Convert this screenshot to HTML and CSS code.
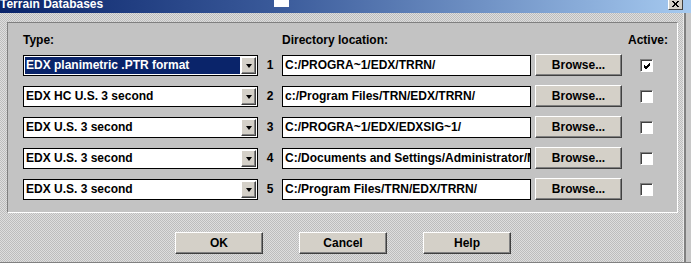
FILE: index.html
```html
<!DOCTYPE html>
<html>
<head>
<meta charset="utf-8">
<title>Terrain Databases</title>
<link rel="stylesheet" href="styles.css">
</head>
<body>
<div class="window">
  <div class="titlebar">
    <span class="title">Terrain Databases</span>
    <span class="tb-block"></span>
    <span class="tb-close"><svg width="9" height="7" viewBox="0 0 9 7"><path d="M1 0L7 6M2 0L8 6M7 0L1 6M8 0L2 6" stroke="#000" stroke-width="1" fill="none"/></svg></span>
  </div>
  <div class="frame">
    <div class="client">
      <div class="panel">
        <div class="grid">
          <div class="lbl">Type:</div>
          <div></div>
          <div class="lbl">Directory location:</div>
          <div></div>
          <div class="lbl lbl-act">Active:</div>

          <div class="combo"><span class="combo-text sel">EDX planimetric .PTR format</span><span class="combo-btn"><span class="arrow"></span></span></div>
          <div class="num">1</div>
          <div class="path">C:/PROGRA~1/EDX/TRRN/</div>
          <div class="btn browse">Browse...</div>
          <div class="chk-cell"><span class="chk"><svg width="9" height="9" viewBox="0 0 9 9"><path d="M1 4L3 6L7 2M1 5L3 7L7 3M1 3L3 5L7 1" stroke="#000" stroke-width="1" fill="none"/></svg></span></div>

          <div class="combo"><span class="combo-text">EDX HC U.S. 3 second</span><span class="combo-btn"><span class="arrow"></span></span></div>
          <div class="num">2</div>
          <div class="path">c:/Program Files/TRN/EDX/TRRN/</div>
          <div class="btn browse">Browse...</div>
          <div class="chk-cell"><span class="chk"></span></div>

          <div class="combo"><span class="combo-text">EDX U.S. 3 second</span><span class="combo-btn"><span class="arrow"></span></span></div>
          <div class="num">3</div>
          <div class="path">C:/PROGRA~1/EDX/EDXSIG~1/</div>
          <div class="btn browse">Browse...</div>
          <div class="chk-cell"><span class="chk"></span></div>

          <div class="combo"><span class="combo-text">EDX U.S. 3 second</span><span class="combo-btn"><span class="arrow"></span></span></div>
          <div class="num">4</div>
          <div class="path">C:/Documents and Settings/Administrator/M</div>
          <div class="btn browse">Browse...</div>
          <div class="chk-cell"><span class="chk"></span></div>

          <div class="combo"><span class="combo-text">EDX U.S. 3 second</span><span class="combo-btn"><span class="arrow"></span></span></div>
          <div class="num">5</div>
          <div class="path">C:/Program Files/TRN/EDX/TRRN/</div>
          <div class="btn browse">Browse...</div>
          <div class="chk-cell"><span class="chk"></span></div>
        </div>
      </div>
      <div class="actions">
        <div class="btn action">OK</div>
        <div class="btn action">Cancel</div>
        <div class="btn action">Help</div>
      </div>
    </div>
    <div class="rframe"></div>
  </div>
  <div class="bframe"></div>
</div>
</body>
</html>
```

FILE: styles.css
```css
* { box-sizing: border-box; }
html, body { margin: 0; padding: 0; }
body {
  font-family: "Liberation Sans", Arial, sans-serif;
  font-weight: bold;
  font-size: 12px;
  color: #000;
  background: #c0c0c0;
}
.window {
  width: 691px;
  height: 263px;
  display: flex;
  flex-direction: column;
  overflow: hidden;
}
.titlebar {
  height: 13px;
  flex: 0 0 13px;
  display: flex;
  align-items: flex-start;
  background: linear-gradient(to right, #0a246a 0%, #3a5a9a 40%, #a6caf0 100%);
  overflow: hidden;
}
.title {
  flex: 0 0 274px;
  color: #fff;
  line-height: 12px;
  margin-top: -2px;
}
.tb-block {
  width: 15px;
  height: 7px;
  background: #fff;
}
.tb-close {
  margin-left: auto;
  margin-right: 8px;
  width: 15px;
  height: 10px;
  background: #d4d0c8;
  border-right: 1px solid #404040;
  border-bottom: 1px solid #404040;
  border-left: 1px solid #fff;
  display: flex;
  align-items: flex-end;
  justify-content: center;
  padding-bottom: 1px;
}
.tb-close svg { display: block; }
.frame {
  flex: 1;
  display: flex;
}
.client {
  flex: 1;
  padding: 9px 5px 0 7px;
  background: repeating-conic-gradient(#bdbdbd 0 25%, #dedede 0 50%) 0 0 / 2px 2px;
}
.panel {
  height: 191px;
  background: #c3c3c3;
  border-top: 1px solid #808080;
  border-left: 1px solid #808080;
  border-right: 1px solid #fff;
  border-bottom: 1px solid #fff;
  padding: 0 5px 0 15px;
}
.grid {
  display: grid;
  grid-template-columns: 235px 24px 249px 91px 49px;
  grid-template-rows: 22px repeat(5, 21px);
  row-gap: 10px;
}
.lbl {
  align-self: end;
  line-height: 14px;
  margin-bottom: -2px;
  white-space: nowrap;
}
.lbl-act { padding-left: 6px; }
.combo {
  display: flex;
  border: 1px solid #000;
  background: #fff;
  padding: 1px;
  height: 21px;
}
.combo-text {
  flex: 1;
  line-height: 17px;
  padding-left: 1px;
  white-space: nowrap;
  overflow: hidden;
}
.combo-text.sel {
  background: #0a246a;
  color: #fff;
  margin-right: 1px;
}
.combo-btn {
  flex: 0 0 15px;
  height: 17px;
  background: #d4d0c8;
  border-top: 1px solid #fff;
  border-left: 1px solid #fff;
  border-right: 1px solid #404040;
  border-bottom: 1px solid #404040;
  box-shadow: inset -1px -1px 0 #808080;
  display: flex;
  align-items: center;
  justify-content: center;
}
.arrow {
  width: 0;
  height: 0;
  border-left: 3px solid transparent;
  border-right: 3px solid transparent;
  border-top: 4px solid #000;
  margin-top: 1px;
}
.num {
  text-align: center;
  line-height: 21px;
}
.path {
  border: 1px solid #000;
  background: #fff;
  line-height: 19px;
  padding-left: 2px;
  white-space: nowrap;
  overflow: hidden;
  height: 21px;
}
.btn {
  background: #d4d0c8;
  border-top: 1px solid #fff;
  border-left: 1px solid #fff;
  border-right: 1px solid #404040;
  border-bottom: 1px solid #404040;
  box-shadow: inset -1px -1px 0 #808080;
  text-align: center;
}
.browse {
  justify-self: end;
  width: 87px;
  height: 22px;
  margin-top: -1px;
  line-height: 20px;
}
.chk-cell {
  display: flex;
  align-items: center;
  justify-content: center;
}
.chk {
  width: 13px;
  height: 13px;
  background: #fff;
  border-top: 1px solid #808080;
  border-left: 1px solid #808080;
  border-right: 1px solid #fff;
  border-bottom: 1px solid #fff;
  box-shadow: inset 1px 1px 0 #404040;
  display: flex;
  align-items: center;
  justify-content: center;
  padding: 1px 0 0 1px;
}
.chk svg { display: block; }
.actions {
  display: flex;
  gap: 36px;
  padding-left: 168px;
  margin-top: 19px;
}
.action {
  width: 88px;
  height: 22px;
  line-height: 20px;
}
.rframe {
  flex: 0 0 8px;
  background: #c8c8c8;
  border-left: 1px solid #e8e8e8;
  box-shadow: inset 2px 0 0 #808080;
}
.bframe {
  flex: 0 0 1px;
  background: #808080;
}
```
